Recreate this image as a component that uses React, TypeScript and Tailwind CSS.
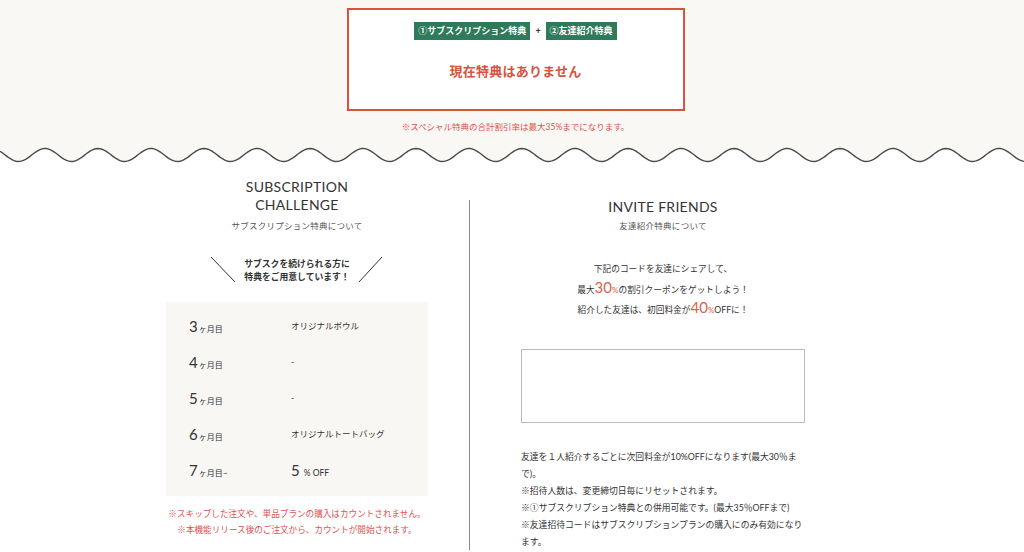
import React from 'react';

const FONT = '"Lato", "Noto Sans CJK JP", sans-serif';
const JP = '"Noto Sans CJK JP", sans-serif';

// wave line between the cream header and the white body
function Wave() {
    const period = 53;
    const phase = 45;
    const pts: string[] = [];
    for (let x = 0; x <= 1024; x += 2) {
        const y = 10 - 6.5 * Math.cos((2 * Math.PI * (x - phase)) / period);
        pts.push(`${x},${y.toFixed(2)}`);
    }
    const line = 'M' + pts.join(' L');
    const fill = `M0,0 L${pts.join(' L')} L1024,0 Z`;
    return (
        <svg width="1024" height="20" viewBox="0 0 1024 20" className="block">
            <path d={fill} fill="#f9f8f4" />
            <path d={line} fill="none" stroke="#4a4a4a" strokeWidth="1.4" />
        </svg>
    );
}

function Slash({ flip }: { flip?: boolean }) {
    return (
        <svg width="26" height="27" viewBox="0 0 26 27" className="block">
            {flip ? (
                <line x1="24" y1="1" x2="1" y2="26" stroke="#333" strokeWidth="1" />
            ) : (
                <line x1="1" y1="1" x2="25" y2="26" stroke="#333" strokeWidth="1" />
            )}
        </svg>
    );
}

const rows = [
    { n: '3', suffix: 'ヶ月目', reward: 'オリジナルボウル' },
    { n: '4', suffix: 'ヶ月目', reward: '-' },
    { n: '5', suffix: 'ヶ月目', reward: '-' },
    { n: '6', suffix: 'ヶ月目', reward: 'オリジナルトートバッグ' },
    { n: '7', suffix: 'ヶ月目~', reward: null },
];

export default function App() {
    return (
        <div className="w-[1024px] bg-white text-[#333]" style={{ fontFamily: FONT }}>
            {/* Header */}
            <div className="bg-[#f9f8f4] pt-[8px] h-[145px] flex flex-col items-center pl-[7px]">
                <div className="w-[338px] h-[103px] border-2 border-[#d6533f] bg-white flex flex-col items-center pt-[12px]">
                    <div className="flex items-center gap-[5px]">
                        <span
                            className="bg-[#2e7a5b] text-white text-[9px] font-bold h-[18px] px-[4px] flex items-center"
                            style={{ fontFamily: JP }}
                        >
                            ①サブスクリプション特典
                        </span>
                        <span className="text-[9px] font-bold text-[#333]">+</span>
                        <span
                            className="bg-[#2e7a5b] text-white text-[9px] font-bold h-[18px] px-[4px] flex items-center"
                            style={{ fontFamily: JP }}
                        >
                            ②友達紹介特典
                        </span>
                    </div>
                    <p className="mt-[22px] text-[13px] font-bold text-[#d6533f] tracking-[0.02em]">現在特典はありません</p>
                </div>
                <p className="mt-[10px] text-[8.5px] text-[#e05050]">※スペシャル特典の合計割引率は最大35%までになります。</p>
            </div>
            <Wave />

            {/* Body */}
            <div className="flex pl-[125px]">
                {/* Subscription challenge */}
                <div className="w-[344px] flex flex-col items-center pt-[13px]">
                    <h2 className="text-[14px] leading-[18px] text-center tracking-[0.02em]">
                        SUBSCRIPTION
                        <br />
                        CHALLENGE
                    </h2>
                    <p className="mt-[5px] text-[8.5px] leading-[14px] text-[#555] tracking-[0.03em]">サブスクリプション特典について</p>

                    <div className="mt-[23px] flex items-center gap-[8px]">
                        <Slash />
                        <p className="text-[8.8px] leading-[13px] font-bold text-center">
                            サブスクを続けられる方に
                            <br />
                            特典をご用意しています！
                        </p>
                        <Slash flip />
                    </div>

                    <div className="mt-[19px] w-[262px] bg-[#f8f7f3] pt-[6px] pb-[8px]">
                        {rows.map((r) => (
                            <div key={r.n} className="h-[36px] flex items-center pl-[23px]">
                                <div className="w-[102px] flex items-baseline">
                                    <span className="text-[15px]">{r.n}</span>
                                    <span className="text-[8px] ml-[1px]">{r.suffix}</span>
                                </div>
                                {r.reward ? (
                                    <span className="text-[8.5px]">{r.reward}</span>
                                ) : (
                                    <span className="flex items-baseline">
                                        <span className="text-[15px]">5</span>
                                        <span className="text-[8.5px] ml-[4px]">% OFF</span>
                                    </span>
                                )}
                            </div>
                        ))}
                    </div>

                    <div className="mt-[10px] text-center text-[8.6px] leading-[16px] text-[#e05050]">
                        <p>※スキップした注文や、単品プランの購入はカウントされません。</p>
                        <p>※本機能リリース後のご注文から、カウントが開始されます。</p>
                    </div>
                </div>

                {/* Divider */}
                <div className="w-px bg-[#8a8a8a] mt-[35px]" />

                {/* Invite friends */}
                <div className="w-[386px] flex flex-col items-center pt-[33px]">
                    <h2 className="text-[14px] leading-[18px] tracking-[0.02em]">INVITE FRIENDS</h2>
                    <p className="mt-[3px] text-[8.5px] leading-[14px] text-[#555] tracking-[0.03em]">友達紹介特典について</p>

                    <div className="mt-[26px] text-center text-[8.7px]">
                        <p className="h-[20.5px] leading-[20.5px]">下記のコードを友達にシェアして、</p>
                        <p className="h-[20.5px] leading-[20.5px]">
                            最大<span className="text-[15px] leading-[0] text-[#e0604c]">30</span>
                            <span className="text-[8px] leading-[0] text-[#e0604c]">%</span>の割引クーポンをゲットしよう！
                        </p>
                        <p className="h-[20.5px] leading-[20.5px]">
                            紹介した友達は、初回料金が<span className="text-[15px] leading-[0] text-[#e0604c]">40</span>
                            <span className="text-[8px] leading-[0] text-[#e0604c]">%</span>OFFに！
                        </p>
                    </div>

                    <div className="mt-[28px] w-[284px] h-[74px] border border-[#bbbbbb] bg-white" />

                    <div className="mt-[25px] w-[284px] text-[8.8px] leading-[17px]">
                        <p>友達を１人紹介するごとに次回料金が10%OFFになります(最大30％まで)。</p>
                        <p>※招待人数は、変更締切日毎にリセットされます。</p>
                        <p>
                            ※<span style={{ fontFamily: JP }}>①</span>サブスクリプション特典との併用可能です。(最大35％OFFまで)
                        </p>
                        <p>※友達招待コードはサブスクリプションプランの購入にのみ有効になります。</p>
                    </div>
                </div>
            </div>
        </div>
    );
}
